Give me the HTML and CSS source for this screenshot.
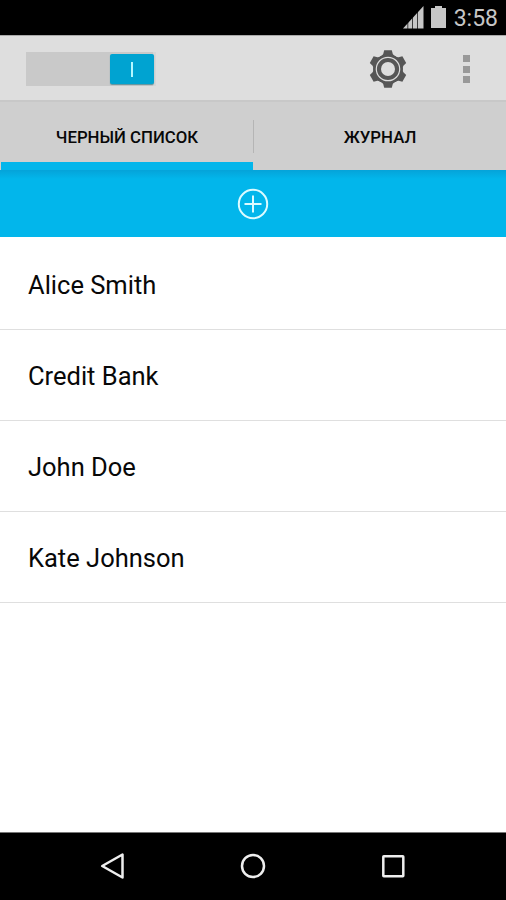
FILE: index.html
```html
<!DOCTYPE html>
<html lang="ru">
<head>
<meta charset="utf-8">
<title>Черный список</title>
<link rel="stylesheet" href="styles.css">
</head>
<body>
<div class="phone">
  <header class="status">
    <svg class="signal" width="21" height="23" viewBox="0 0 21 23"><path d="M0 22.500 20.500 0v22.500z" fill="#c6c6c6"/><path d="M4.800 12v11M9.500 8v15M14.500 4v19" stroke="#000" stroke-opacity=".7" stroke-width="1"/></svg>
    <svg class="battery" width="15" height="22" viewBox="0 0 15 22"><path d="M0 2h4V0h7v2h4v20H0z" fill="#c6c6c6"/></svg>
    <span class="clock">3:58</span>
  </header>
  <div class="toolbar">
    <div class="switch"><span class="thumb"><i class="mark"></i></span></div>
    <svg class="gear" width="38" height="40" viewBox="-19 -20 38 40">
      <g fill="#565656">
        <circle r="14.800"/>
        <path id="tooth" d="M-8.500-12Q-5.500-13.500-4.800-15L-3.800-18.800H3.800L4.800-15Q5.500-13.500 8.500-12z"/>
        <use href="#tooth" transform="rotate(60)"/>
        <use href="#tooth" transform="rotate(120)"/>
        <use href="#tooth" transform="rotate(180)"/>
        <use href="#tooth" transform="rotate(240)"/>
        <use href="#tooth" transform="rotate(300)"/>
      </g>
      <circle r="11.700" fill="none" stroke="#dedede" stroke-width="1.200"/>
      <circle r="7" fill="#dedede"/>
    </svg>
    <div class="overflow"><i></i><i></i><i></i></div>
  </div>
  <nav class="tabs">
    <div class="tab active">ЧЕРНЫЙ СПИСОК</div>
    <i class="divider"></i>
    <div class="tab">ЖУРНАЛ</div>
  </nav>
  <div class="add">
    <svg width="32" height="32" viewBox="0 0 32 32" fill="none" stroke="#dcfbff" stroke-width="2"><circle cx="16" cy="16" r="14.200"/><path d="M7.500 16h17M16 7.500v17"/></svg>
  </div>
  <ul class="list">
    <li>Alice Smith</li>
    <li>Credit Bank</li>
    <li>John Doe</li>
    <li>Kate Johnson</li>
  </ul>
  <footer class="navbar">
    <svg width="26" height="28" viewBox="0 0 26 28"><path d="M2.200 14 22.500 2.500V25.500z"/></svg>
    <svg width="26" height="28" viewBox="0 0 26 28"><circle cx="13" cy="14" r="11"/></svg>
    <svg width="26" height="28" viewBox="0 0 26 28"><rect x="3.300" y="4.300" width="20" height="20" rx=".5"/></svg>
  </footer>
</div>
</body>
</html>
```
FILE: styles.css
```css
* { box-sizing: border-box; }
body { margin: 0; font-family: Roboto, sans-serif; color: #080808; background: #fff; }
svg { display: block; flex: none; }
.phone { width: 506px; height: 900px; display: flex; flex-direction: column; overflow: hidden; }
.status { height: 35px; flex: none; background: #000; display: flex; justify-content: flex-end; align-items: flex-start; padding-right: 8px; }
.signal { margin: 6px 7px 0 0; }
.battery { margin: 6px 8px 0 0; }
.clock { color: #c6c6c6; font-size: 23px; line-height: 27px; margin-top: 5px; }
.toolbar { height: 65px; flex: none; background: #dedede; border-top: 1px solid #a9a9a9; display: flex; align-items: flex-start; padding-left: 26px; }
.switch { width: 130px; height: 34px; margin-top: 16px; background: linear-gradient(90deg, #c9c9c9 127px, #d6d6d6 127px); display: flex; justify-content: flex-end; padding: 2px 2px 2px 0; }
.thumb { width: 44px; height: 30px; border-radius: 2px; background: #00a3d1; box-shadow: 0 1px 1px #5d929d; display: flex; align-items: center; justify-content: center; }
.mark { width: 2px; height: 15px; background: #b4f7ff; margin-top: 1px; }
.gear { margin: 13px 0 0 213px; }
.overflow { margin: 19px 0 0 56px; display: flex; flex-direction: column; gap: 3.500px; }
.overflow i { width: 7px; height: 7px; background: #999; }
.tabs { height: 70px; flex: none; background: #cfcfcf; border-top: 2px solid #c8c8c8; display: flex; }
.tab { flex: 1; text-align: center; font-size: 16.800px; font-weight: 500; line-height: 20px; padding-top: 25px; }
.active { margin-left: 1px; flex: 0 0 252px; border-bottom: 8px solid #03b6eb; }
.divider { width: 1px; height: 33px; margin-top: 18px; background: #b5b5b5; }
.add { height: 67px; flex: none; background: linear-gradient(#05a3d9, #02b6eb 9px); display: flex; justify-content: center; padding-top: 18px; }
.list { margin: 0; padding: 0; list-style: none; flex: 1; }
.list li { height: 91px; padding: 31px 28px 0; border-bottom: 1px solid #dfdfdf; font-size: 25.500px; line-height: 30px; }
.list li:first-child { height: 93px; padding-top: 33px; }
.navbar { height: 68px; flex: none; background: #000; border-top: 1px solid #777; display: flex; justify-content: center; gap: 114px; padding-top: 19px; }
.navbar svg { fill: none; stroke: #eee; stroke-width: 2.500; stroke-linejoin: round; }
```
